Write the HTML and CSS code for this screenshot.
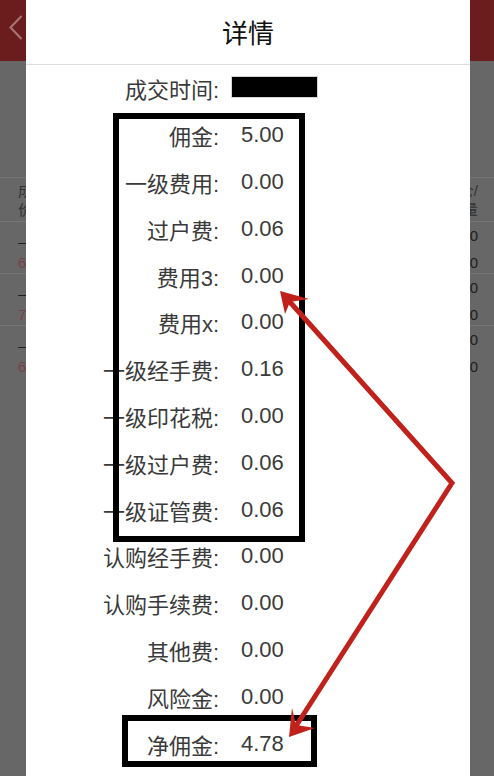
FILE: index.html
```html
<!DOCTYPE html>
<html lang="zh">
<head>
<meta charset="utf-8">
<title>详情</title>
<link rel="stylesheet" href="styles.css">
</head>
<body>
<div class="app">
  <header class="app-bar">
    <svg class="back" width="14" height="26" viewBox="0 0 14 26"><path d="M12.5 1 L1.5 12.5 L12.5 24" fill="none" stroke="#a87676" stroke-width="2"/></svg>
  </header>
  <div class="app-gap"></div>
  <div class="tbl">
    <div class="trow thead"><div class="tl">成交<br>价格</div><div class="tr">持仓/<br>可用量</div></div>
    <div class="trow"><div class="tl">—<br><span class="red">6.35</span></div><div class="tr">100<br>100</div></div>
    <div class="trow"><div class="tl">—<br><span class="red">7.12</span></div><div class="tr">200<br>200</div></div>
    <div class="trow"><div class="tl">—<br><span class="red">6.80</span></div><div class="tr">300<br>300</div></div>
  </div>

  <div class="modal">
    <div class="modal-title">详情</div>
    <div class="detail">
      <div class="k">成交时间:</div><div class="v"><span class="redact"></span></div>
      <div class="k">佣金:</div><div class="v">5.00</div>
      <div class="k">一级费用:</div><div class="v">0.00</div>
      <div class="k">过户费:</div><div class="v">0.06</div>
      <div class="k">费用3:</div><div class="v">0.00</div>
      <div class="k">费用x:</div><div class="v">0.00</div>
      <div class="k">一级经手费:</div><div class="v">0.16</div>
      <div class="k">一级印花税:</div><div class="v">0.00</div>
      <div class="k">一级过户费:</div><div class="v">0.06</div>
      <div class="k">一级证管费:</div><div class="v">0.06</div>
      <div class="k">认购经手费:</div><div class="v">0.00</div>
      <div class="k">认购手续费:</div><div class="v">0.00</div>
      <div class="k">其他费:</div><div class="v">0.00</div>
      <div class="k">风险金:</div><div class="v">0.00</div>
      <div class="k">净佣金:</div><div class="v">4.78</div>
    </div>
  </div>

  <div class="mark mark-a"></div>
  <div class="mark mark-b"></div>

  <svg class="arrows" width="494" height="776" viewBox="0 0 494 776">
    <polyline points="289,301 452,483 296,726" fill="none" stroke="#c0211b" stroke-width="5" stroke-linejoin="miter"/>
    <polygon points="280,291 309,299 290,302 285,314" fill="#c0211b"/>
    <polygon points="289,737 292,708 296,725 315,728" fill="#c0211b"/>
  </svg>
</div>
</body>
</html>
```

FILE: styles.css
```css
* { box-sizing: border-box; }

body {
  margin: 0;
  font-family: "Liberation Sans", "Noto Sans CJK SC", sans-serif;
  background: #666;
}

.app {
  position: relative;
  width: 494px;
  height: 776px;
  overflow: hidden;
  background: #676767;
}

.app-bar {
  height: 61px;
  background: #6b1d1d;
  padding: 15px 0 0 9px;
}

.back { display: block; }

.app-gap { height: 116px; }

.tbl { font-size: 15px; }

.trow {
  display: flex;
  justify-content: space-between;
  border-top: 1px solid #757575;
  height: 52px;
  line-height: 21px;
  color: #1e1e1e;
}

.trow .tl { padding: 9px 0 0 18px; }
.trow .tr { padding: 0 16px 0 0; line-height: 27px; text-align: right; }

.thead { height: 44px; }
.thead .tl, .thead .tr { padding-top: 3px; line-height: 19px; color: #333; }

.red { color: #7d3f48; }

.modal {
  position: absolute;
  left: 26px;
  top: 0;
  width: 444px;
  height: 776px;
  background: #fff;
}

.modal-title {
  height: 65px;
  line-height: 64px;
  text-align: center;
  font-family: "Noto Sans CJK SC", sans-serif;
  font-size: 26px;
  color: #111;
  border-bottom: 1px solid #dedede;
}

.detail {
  display: grid;
  grid-template-columns: 193px 1fr;
  column-gap: 22px;
  grid-auto-rows: 46.8px;
  align-items: center;
  font-size: 22px;
  color: #3a3a3a;
}

.k { text-align: right; white-space: nowrap; }

.redact {
  display: block;
  width: 85px;
  height: 20px;
  margin-left: -9px;
  margin-top: -2px;
  background: #000;
  outline: 1px solid #d4d4d4;
}

.mark {
  position: absolute;
  border: 6px solid #000;
}

.mark-a { left: 113px; top: 113px; width: 192px; height: 429px; }
.mark-b { left: 122px; top: 715px; width: 195px; height: 52px; }

.arrows {
  position: absolute;
  left: 0;
  top: 0;
  pointer-events: none;
}
```
